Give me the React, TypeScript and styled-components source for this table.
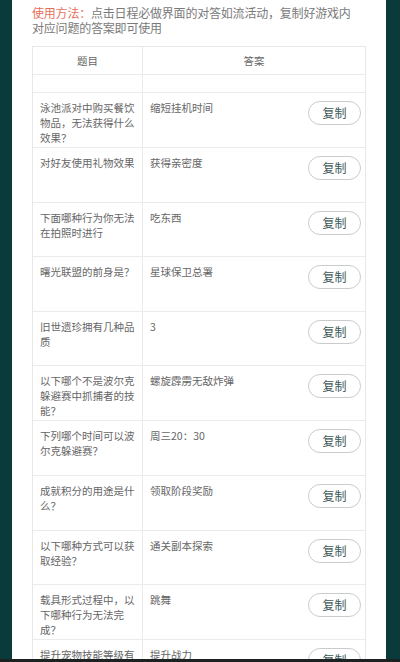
import React from "react";
import styled, { createGlobalStyle } from "styled-components";

const Global = createGlobalStyle`
  html {
    -webkit-text-size-adjust: none;
    text-size-adjust: none;
  }
  html, body { margin: 0; padding: 0; background: #0b3a3a; }
  body {
    font-family: "Noto Sans CJK SC", "Noto Sans", sans-serif;
    text-spacing-trim: space-all;
    text-autospace: no-autospace;
  }
  * { box-sizing: border-box; }
`;

const Frame = styled.div`
  width: 400px;
  height: 662px;
  display: flex;
  flex-direction: column;
  background: #0b3a3a;
  overflow: hidden;
`;

const Panel = styled.div`
  flex: 1;
  min-height: 0;
  margin: 0 14px 0 12px;
  background: #ffffff;
  padding: 5px 20px 0;
  overflow: hidden;
`;

const BottomBar = styled.div`
  height: 3px;
  flex: none;
  background: #1c2222;
`;

const Intro = styled.div`
  margin: 0 0 11px;
  font-size: 12px;
  line-height: 15px;
  letter-spacing: -0.2px;
  color: #7a7a7a;
`;

const IntroLine = styled.span`
  display: block;
  white-space: nowrap;
`;

const Label = styled.span`
  color: #e86f5c;
`;

const Table = styled.div`
  width: 334px;
  border: 1px solid #e8e8e8;
  border-bottom: none;
`;

const Row = styled.div<{ $h?: number }>`
  display: grid;
  grid-template-columns: 109px 1fr;
  min-height: ${(p) => (p.$h ? `${p.$h}px` : "54.6px")};
  border-bottom: 1px solid #ebebeb;
`;

const HeadCell = styled.div`
  display: flex;
  align-items: center;
  justify-content: center;
  font-size: 10.5px;
  color: #666;
  & + & { border-left: 1px solid #ebebeb; }
`;

const QCell = styled.div`
  padding: 7px 7px 2px 7px;
  font-size: 10.5px;
  line-height: 15px;
  color: #666;
`;

const ACell = styled.div`
  border-left: 1px solid #ebebeb;
  padding: 7px 4px 2px 7px;
  display: flex;
  justify-content: space-between;
  align-items: flex-start;
  font-size: 10.5px;
  line-height: 15px;
  color: #666;
`;

const CopyButton = styled.button`
  flex: none;
  margin-top: 1px;
  width: 53px;
  height: 24px;
  border-radius: 12px;
  border: 1px solid #c9cccc;
  background: #fff;
  color: #3e5858;
  font-family: inherit;
  font-size: 12px;
  line-height: 1;
  padding: 0;
`;

const rows: [string, string][] = [
  ["泳池派对中购买餐饮物品，无法获得什么效果？", "缩短挂机时间"],
  ["对好友使用礼物效果", "获得亲密度"],
  ["下面哪种行为你无法在拍照时进行", "吃东西"],
  ["曙光联盟的前身是？", "星球保卫总署"],
  ["旧世遗珍拥有几种品质", "3"],
  ["以下哪个不是波尔克躲避赛中抓捕者的技能？", "螺旋霹雳无敌炸弹"],
  ["下列哪个时间可以波尔克躲避赛？", "周三20：30"],
  ["成就积分的用途是什么？", "领取阶段奖励"],
  ["以下哪种方式可以获取经验？", "通关副本探索"],
  ["载具形式过程中，以下哪种行为无法完成？", "跳舞"],
  ["提升宠物技能等级有什么用？", "提升战力"],
];

export default function App() {
  return (
    <>
      <Global />
      <Frame>
        <Panel>
          <Intro>
            <IntroLine>
              <Label>使用方法：</Label>点击日程必做界面的对答如流活动，复制好游戏内
            </IntroLine>
            <IntroLine>对应问题的答案即可使用</IntroLine>
          </Intro>
          <Table>
            <Row $h={28}>
              <HeadCell>题目</HeadCell>
              <HeadCell>答案</HeadCell>
            </Row>
            <Row $h={18}>
              <HeadCell />
              <HeadCell />
            </Row>
            {rows.map(([q, a], i) => (
              <Row key={i}>
                <QCell>{q}</QCell>
                <ACell>
                  <span>{a}</span>
                  <CopyButton>复制</CopyButton>
                </ACell>
              </Row>
            ))}
          </Table>
        </Panel>
        <BottomBar />
      </Frame>
    </>
  );
}
